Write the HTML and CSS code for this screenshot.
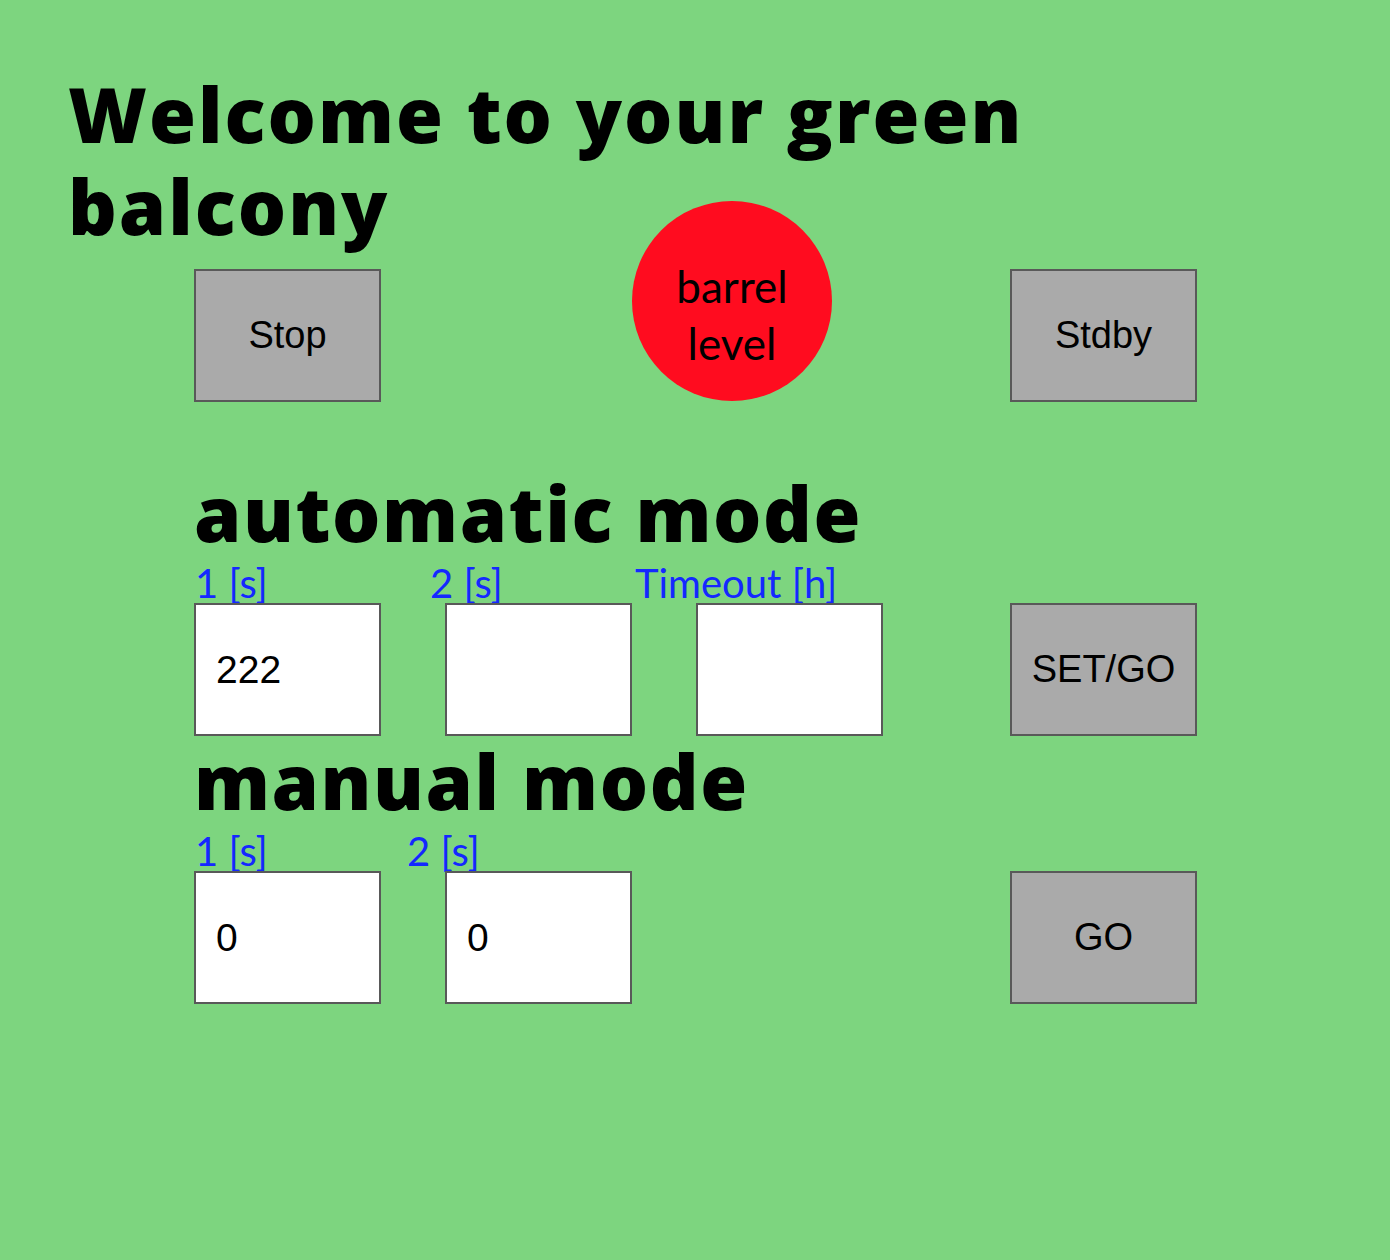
FILE: index.html
```html
<!DOCTYPE html>
<html lang="en">
<head>
<meta charset="utf-8">
<title>Green balcony</title>
<link rel="stylesheet" href="styles.css">
</head>
<body>
<main class="page">
  <h1 class="title">Welcome to your green<br>balcony</h1>
  <div class="controls">
    <div class="top-row">
      <button class="btn">Stop</button>
      <div class="lamp"><span>barrel<br>level</span></div>
      <button class="btn btn-stdby">Stdby</button>
    </div>

    <section class="mode">
      <h2 class="mode-title">automatic mode</h2>
      <div class="labels labels-auto">
        <span class="label">1 [s]</span>
        <span class="label">2 [s]</span>
        <span class="label">Timeout [h]</span>
      </div>
      <div class="fields">
        <input class="field" type="text" value="222">
        <input class="field" type="text" value="">
        <input class="field" type="text" value="">
        <button class="btn btn-end">SET/GO</button>
      </div>
    </section>

    <section class="mode">
      <h2 class="mode-title mode-title-tight">manual mode</h2>
      <div class="labels labels-manual">
        <span class="label">1 [s]</span>
        <span class="label">2 [s]</span>
      </div>
      <div class="fields">
        <input class="field" type="text" value="0">
        <input class="field" type="text" value="0">
        <span class="spacer"></span>
        <button class="btn btn-end">GO</button>
      </div>
    </section>
  </div>
</main>
</body>
</html>
```

FILE: styles.css
```css
html, body {
  margin: 0;
  padding: 0;
}

body {
  background: #7dd57f;
  min-height: 1260px;
  font-family: "Lato", "Open Sans", sans-serif;
  color: #000;
}

.page {
  padding: 68px 0 0 68px;
}

.title {
  margin: 0;
  font-family: "Open Sans", sans-serif;
  font-weight: 800;
  font-size: 76px;
  line-height: 92px;
  letter-spacing: 2px;
}

.controls {
  padding-left: 126px;
  margin-top: 17px;
}

.top-row {
  display: flex;
  align-items: flex-start;
}

.btn {
  box-sizing: border-box;
  width: 187px;
  height: 133px;
  padding: 0;
  background: #aaaaaa;
  border: 2px solid #595959;
  border-radius: 0;
  font-family: "Liberation Sans", Arial, sans-serif;
  font-size: 38px;
  color: #000;
}

.lamp {
  box-sizing: border-box;
  width: 200px;
  height: 200px;
  margin: -68px 0 0 251px;
  border-radius: 50%;
  background: #ff0c1f;
  display: flex;
  align-items: center;
  justify-content: center;
  padding-top: 28px;
  text-align: center;
  font-family: "Lato", sans-serif;
  font-size: 44px;
  line-height: 57px;
}

.btn-stdby {
  margin-left: 178px;
}

.mode-title {
  margin: 65px 0 0;
  font-family: "Open Sans", sans-serif;
  font-weight: 800;
  font-size: 76px;
  line-height: 92px;
  letter-spacing: 1.6px;
}

.mode-title-tight {
  margin-top: -1px;
}

.labels {
  display: grid;
  margin-top: 4px;
  padding-left: 1px;
  height: 40px;
  line-height: 40px;
  font-family: "Lato", sans-serif;
  font-size: 40px;
  color: #1428ff;
  white-space: nowrap;
}

.labels-auto {
  grid-template-columns: 235px 205px auto;
}

.labels-manual {
  grid-template-columns: 212px auto;
}

.fields {
  display: grid;
  grid-template-columns: 187px 187px 187px 250px;
  column-gap: 64px;
}

.field {
  box-sizing: border-box;
  width: 187px;
  height: 133px;
  margin: 0;
  padding: 0 0 0 20px;
  background: #fff;
  border: 2px solid #595959;
  border-radius: 0;
  font-family: "Liberation Sans", Arial, sans-serif;
  font-size: 39px;
  color: #000;
  outline: none;
}

.btn-end {
  justify-self: end;
}
```
